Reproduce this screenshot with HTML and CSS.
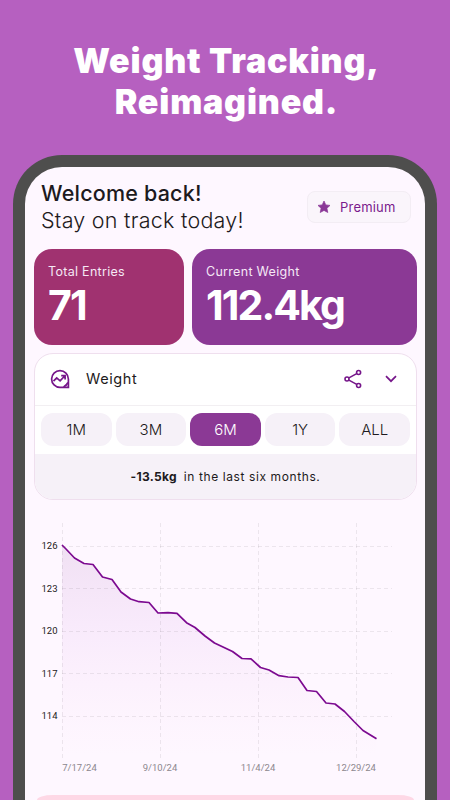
FILE: index.html
```html
<!DOCTYPE html>
<html lang="en">
<head>
    <meta charset="UTF-8">
    <title>Weight Tracking</title>
    <link rel="stylesheet" href="styles.css">
</head>
<body>
    <h1 class="headline">Weight Tracking,<br>Reimagined.</h1>

    <div class="phone">
        <header class="welcome">
            <div>
                <h2>Welcome back!</h2>
                <p>Stay on track today!</p>
            </div>
            <button class="premium">
                <svg width="14" height="14" viewBox="0 0 14 14"><path d="M7 1l1.800 3.900 4.200.5-3.100 2.900.9 4.200L7 10.400l-3.800 2.100.9-4.200L1 5.400l4.200-.5z" fill="#8a3796" stroke="#8a3796" stroke-width=".7" stroke-linejoin="round"/></svg>
                <span>Premium</span>
            </button>
        </header>

        <div class="stats">
            <div class="stat entries">
                <span class="stat-label">Total Entries</span>
                <span class="stat-value">71</span>
            </div>
            <div class="stat current">
                <span class="stat-label">Current Weight</span>
                <span class="stat-value">112.4kg</span>
            </div>
        </div>

        <section class="panel">
            <div class="panel-header">
                <svg width="20" height="20" viewBox="0 0 20 20" fill="none" stroke="#76168a" stroke-width="1.7">
                    <path d="M18.400 10V18.400H10A8.400 8.400 0 1 1 18.400 10Z"/>
                    <path d="M18 13.500Q16.500 16.500 13.500 18"/>
                    <path d="M3.500 12.200l3.200-3.300 3.400 3 4.600-4.900M11.200 6.600h3.900v4"/>
                </svg>
                <span class="panel-title">Weight</span>
                <svg width="18" height="20" viewBox="0 0 18 20" fill="none" stroke="#76168a" stroke-width="1.6">
                    <circle cx="3" cy="10" r="2"/>
                    <circle cx="14.600" cy="3.500" r="2"/>
                    <circle cx="14.600" cy="16.500" r="2"/>
                    <path d="M4.900 8.900l7.800-4.300M4.900 11.100l7.800 4.300"/>
                </svg>
                <svg class="chevron-icon" width="12" height="8" viewBox="0 0 12 8" fill="none" stroke="#76168a" stroke-width="1.7"><path d="M1 1.200l5 5 5-5"/></svg>
            </div>
            <div class="tabs">
                <button class="tab">1M</button>
                <button class="tab">3M</button>
                <button class="tab active">6M</button>
                <button class="tab">1Y</button>
                <button class="tab">ALL</button>
            </div>
            <div class="summary"><b>-13.5kg</b><span>in the last six months.</span></div>
        </section>

        <svg class="chart" width="400" height="270" viewBox="25 515 400 270">
            <defs>
                <linearGradient id="fade" x1="0" y1="545" x2="0" y2="757" gradientUnits="userSpaceOnUse">
                    <stop offset="0" stop-color="#8a3796" stop-opacity="0.12"/>
                    <stop offset="0.45" stop-color="#b040d0" stop-opacity="0.06"/>
                    <stop offset="1" stop-color="#f080c0" stop-opacity="0"/>
                </linearGradient>
            </defs>
            <path class="area" fill="url(#fade)" d="M62 545L66 549L74.500 558L84 563.500L93 564.500L102.500 577L112 579.500L121 592L130.500 599L139 601.700L149 602.500L158 613L168 612.700L177 613.300L186.500 622.700L195 627.500L205 636L214.500 643L223 647L232.500 651.500L242 658.500L251 658.800L260.500 667.500L269 670L279 675.700L288 677L298 677.500L307 690.500L316.500 691.500L326 703L335 704L344.500 711.500L354 721.500L363 730.500L376.500 738.800V757H62Z"/>
            <path class="grid" d="M62 546.500H392M62 588.500H392M62 631.500H392M62 673.500H392M62 716.500H392M62.500 523V758M160.500 523V758M258.500 523V758M356.500 523V758"/>
            <path class="line" d="M62 545L66 549L74.500 558L84 563.500L93 564.500L102.500 577L112 579.500L121 592L130.500 599L139 601.700L149 602.500L158 613L168 612.700L177 613.300L186.500 622.700L195 627.500L205 636L214.500 643L223 647L232.500 651.500L242 658.500L251 658.800L260.500 667.500L269 670L279 675.700L288 677L298 677.500L307 690.500L316.500 691.500L326 703L335 704L344.500 711.500L354 721.500L363 730.500L376.500 738.800"/>
            <g class="y-labels">
                <text x="57.500" y="549">126</text>
                <text x="57.500" y="591.500">123</text>
                <text x="57.500" y="634">120</text>
                <text x="57.500" y="676.500">117</text>
                <text x="57.500" y="719">114</text>
            </g>
            <g class="x-labels">
                <text x="79.500" y="771">7/17/24</text>
                <text x="160" y="771">9/10/24</text>
                <text x="258" y="771">11/4/24</text>
                <text x="356" y="771">12/29/24</text>
            </g>
        </svg>

        <div class="next-card"></div>
    </div>
</body>
</html>
```
FILE: styles.css
```css
* {
    box-sizing: border-box;
    margin: 0;
    padding: 0;
}
body {
    width: 450px;
    height: 800px;
    background-color: #b660c0;
    font-family: "Inter", sans-serif;
}
button {
    border: none;
    font-family: inherit;
}
.headline {
    height: 155px;
    padding: 40px 0 0 3px;
    text-align: center;
    color: #fff;
    font-size: 34px;
    font-weight: 900;
    line-height: 41px;
    letter-spacing: 0.8px;
}
.phone {
    width: 424px;
    height: 645px;
    margin-left: 13px;
    padding: 0 8px 0 9px;
    border: 12px solid #4e4e4d;
    border-bottom: none;
    border-radius: 49px 49px 0 0;
    background-color: #fef7ff;
}
.welcome {
    height: 82px;
    padding: 13px 6px 0 7px;
    display: flex;
    justify-content: space-between;
    color: #1d1a20;
}
.welcome h2 {
    font-size: 21.5px;
    font-weight: 500;
    line-height: 27px;
    letter-spacing: 0.2px;
}
.welcome p {
    font-size: 21.5px;
    font-weight: 300;
    line-height: 27px;
    letter-spacing: 0.25px;
}
.premium {
    width: 104px;
    height: 32px;
    margin-top: 11px;
    padding-left: 9px;
    display: flex;
    align-items: center;
    gap: 9px;
    border: 1px solid #f3edf4;
    border-radius: 8px;
    background-color: #faf5fb;
    color: #7a1a8c;
    font-size: 13px;
    letter-spacing: 0.2px;
}
.stats {
    display: flex;
    gap: 8px;
}
.stat {
    height: 96px;
    padding: 15px 14px 0;
    display: flex;
    flex-direction: column;
    border-radius: 18px;
    color: #fff;
}
.entries {
    width: 150px;
    background-color: #a03270;
}
.current {
    flex: 1;
    background-color: #8b3995;
}
.stat-label {
    font-size: 12.5px;
    line-height: 16px;
    letter-spacing: 0.3px;
    color: #f5e8f5;
}
.stat-value {
    font-size: 41px;
    font-weight: 700;
    line-height: 50px;
    letter-spacing: -1.9px;
}
.panel {
    height: 147px;
    margin-top: 8px;
    overflow: hidden;
    border: 1px solid #efdfee;
    border-radius: 19px;
    background-color: #fff;
}
.panel-header {
    height: 52px;
    padding: 0 19px 2px 15px;
    display: flex;
    align-items: center;
    border-bottom: 1px solid #f2eff2;
}
.panel-title {
    flex: 1;
    margin-left: 16px;
    font-size: 14.5px;
    letter-spacing: 0.6px;
    color: #1d1a20;
}
.chevron-icon {
    margin-left: 23px;
}
.tabs {
    height: 48px;
    padding: 7px 6px 8px;
    display: flex;
    gap: 4px;
}
.tab {
    flex: 1;
    border-radius: 12px;
    background-color: #f6f1f8;
    color: #1d1a20;
    font-size: 15px;
    font-weight: 350;
}
.tab.active {
    background-color: #8b3995;
    color: #fff;
}
.summary {
    height: 45px;
    display: flex;
    justify-content: center;
    align-items: center;
    gap: 7px;
    background-color: #f6f1f8;
    color: #1d1a20;
    font-size: 12px;
}
.summary b {
    letter-spacing: 0.3px;
}
.summary span {
    letter-spacing: 0.6px;
}
.chart {
    display: block;
    margin: 15px 0 0 -9px;
}
.grid {
    fill: none;
    stroke: #000;
    stroke-opacity: 0.07;
    stroke-dasharray: 4 3;
}
.line {
    fill: none;
    stroke: #7c0a90;
    stroke-width: 1.7;
    stroke-linejoin: round;
}
.y-labels {
    font: 9.5px "Roboto", sans-serif;
    text-anchor: end;
    fill: #1d1a20;
}
.x-labels {
    font: 9.5px "Roboto", sans-serif;
    text-anchor: middle;
    fill: #8c878e;
}
.next-card {
    height: 5px;
    margin: 10px 3px 0;
    border-radius: 16px 16px 0 0 / 5px 5px 0 0;
    background-color: #fed8e6;
}
```
